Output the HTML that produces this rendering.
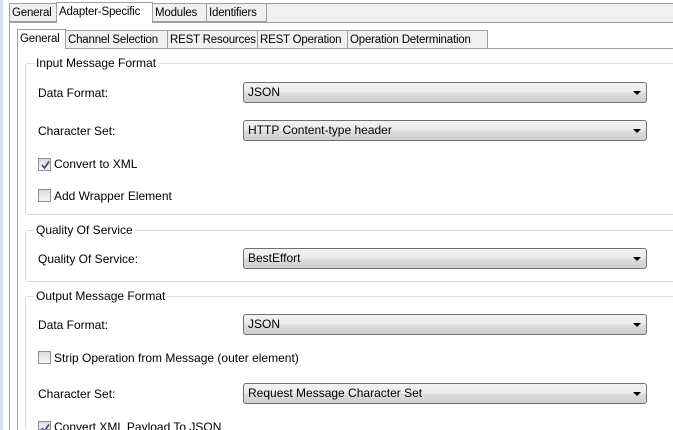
<!DOCTYPE html>
<html style="overflow:hidden;height:430px"><head><style>
body{margin:0;width:673px;height:430px;overflow:hidden;background:#fff;font-family:"Liberation Sans",sans-serif;font-size:12px;color:#000;position:relative}
.a{position:absolute}
.t{position:absolute;height:19px;line-height:19px;border:1px solid #a0a0a0;background:#f0f0f0;padding:0 2px;box-sizing:border-box;white-space:nowrap;font-size:11.5px;letter-spacing:-0.2px;overflow:hidden}
.sel{background:#fff;border-bottom:none}
.grp{position:absolute;left:25px;width:648px;border:1px solid #d5dfe5;border-right:none;border-radius:3px 0 0 3px;box-sizing:border-box}
.gt{position:absolute;top:-8px;left:8px;background:#fff;padding:0 2px;line-height:15px}
.lbl{position:absolute;left:38px;line-height:14px}
.cb{position:absolute;left:243px;width:404px;height:21px;box-sizing:border-box;border:1px solid #707070;border-radius:3px;background:linear-gradient(#f2f2f2 0%,#ebebeb 50%,#dddddd 51%,#cfcfcf 100%);line-height:19px;padding-left:4px}
.cb:after{content:"";position:absolute;right:5px;top:8px;border-left:4px solid transparent;border-right:4px solid transparent;border-top:4px solid #000}
.chk{position:absolute;left:38px;width:13px;height:13px;box-sizing:border-box;border:1px solid #8e8f8f;background:linear-gradient(#dcdcdc,#f6f6f6)}
.chk svg{position:absolute;left:1px;top:1px}
</style></head><body>
<div class="a" style="left:0;top:0;width:3px;height:430px;background:#d6dde6"></div>
<div class="a" style="left:9px;top:3px;width:664px;height:18px;background:#f0f0f0;border-top:1px solid #a0a0a0;border-bottom:1px solid #a0a0a0"></div>
<div class="a" style="left:9px;top:22px;width:1px;height:408px;background:#a0a0a0"></div>
<div class="t" style="left:9px;top:3px;width:48px">General</div>
<div class="t sel" style="left:56px;top:2px;width:97px;height:21px">Adapter-Specific</div>
<div class="t" style="left:152px;top:3px;width:55px">Modules</div>
<div class="t" style="left:206px;top:3px;width:61px">Identifiers</div>

<div class="a" style="left:17px;top:48px;width:656px;height:1px;background:#a0a0a0"></div>
<div class="a" style="left:17px;top:48px;width:1px;height:382px;background:#a0a0a0"></div>
<div class="t sel" style="left:17px;top:29px;width:49px;height:20px">General</div>
<div class="t" style="left:65px;top:30px;width:103px">Channel Selection</div>
<div class="t" style="left:167px;top:30px;width:91px">REST Resources</div>
<div class="t" style="left:257px;top:30px;width:91px">REST Operation</div>
<div class="t" style="left:347px;top:30px;width:141px">Operation Determination</div>

<div class="grp" style="top:63px;height:152px"><div class="gt">Input Message Format</div></div>
<div class="lbl" style="top:86px">Data Format:</div>
<div class="cb" style="top:82px">JSON</div>
<div class="lbl" style="top:124px">Character Set:</div>
<div class="cb" style="top:120px">HTTP Content-type header</div>
<div class="chk" style="top:158px"><svg width="11" height="11"><path d="M2 5 L4.5 8 L9 1.5" stroke="#2a3f8f" stroke-width="1.6" fill="none"/></svg></div>
<div class="lbl" style="left:54px;top:157px">Convert to XML</div>
<div class="chk" style="top:189px"></div>
<div class="lbl" style="left:54px;top:189px">Add Wrapper Element</div>

<div class="grp" style="top:230px;height:52px"><div class="gt">Quality Of Service</div></div>
<div class="lbl" style="top:252px">Quality Of Service:</div>
<div class="cb" style="top:248px">BestEffort</div>

<div class="grp" style="top:296px;height:134px;border-bottom:none"><div class="gt">Output Message Format</div></div>
<div class="lbl" style="top:318px">Data Format:</div>
<div class="cb" style="top:314px">JSON</div>
<div class="chk" style="top:351px"></div>
<div class="lbl" style="left:54px;top:351px">Strip Operation from Message (outer element)</div>
<div class="lbl" style="top:387px">Character Set:</div>
<div class="cb" style="top:383px">Request Message Character Set</div>
<div class="chk" style="top:421px;height:9px;overflow:hidden"><svg width="11" height="11"><path d="M2 5 L4.5 8 L9 1.5" stroke="#2a3f8f" stroke-width="1.6" fill="none"/></svg></div>
<div class="lbl" style="left:54px;top:420px;height:10px;overflow:hidden">Convert XML Payload To JSON</div>
</body></html>
